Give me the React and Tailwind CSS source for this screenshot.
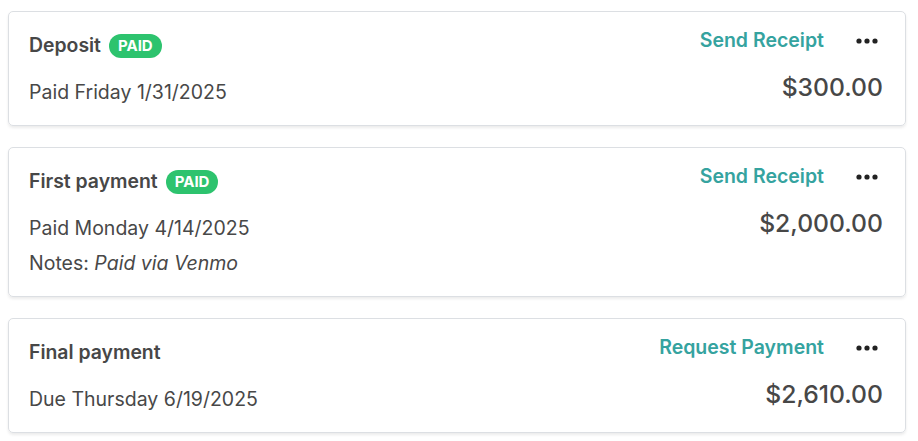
import React from 'react'

const payments = [
  { title: 'Deposit', paid: true, action: 'Send Receipt', date: 'Paid Friday 1/31/2025', amount: '$300.00' },
  { title: 'First payment', paid: true, action: 'Send Receipt', date: 'Paid Monday 4/14/2025', notes: 'Paid via Venmo', amount: '$2,000.00' },
  { title: 'Final payment', paid: false, action: 'Request Payment', date: 'Due Thursday 6/19/2025', amount: '$2,610.00' },
]

function Dots() {
  return (
    <svg width="22" height="6" viewBox="0 0 22 6" className="block">
      <circle cx="3" cy="3" r="2.6" fill="#222" />
      <circle cx="11" cy="3" r="2.6" fill="#222" />
      <circle cx="19" cy="3" r="2.6" fill="#222" />
    </svg>
  )
}

export default function App() {
  return (
    <div className="w-[918px] h-[441px] bg-white pl-2 pt-[11px] pr-3 flex flex-col gap-[21px]" style={{ fontFamily: 'Inter, "Noto Sans", sans-serif' }}>
      {payments.map(p => (
        <div key={p.title} className="w-[898px] rounded-[5px] border border-[#dcdfe3] shadow-[0_2px_3px_rgba(0,0,0,0.08)] flex justify-between pl-5 pr-[22px] pt-[22px] pb-[19px]">
          <div className="flex flex-col">
            <div className="flex items-center gap-2 h-6">
              <span className="text-[19.4px] font-semibold text-[#474747]">{p.title}</span>
              {p.paid && (
                <span className="h-6 px-[9px] rounded-full bg-[#2dc36e] text-white text-[15px] font-bold flex items-center">PAID</span>
              )}
            </div>
            <div className="mt-5 text-[19.5px] leading-7 text-[#484848]">{p.date}</div>
            {p.notes && (
              <div className="mt-[7px] text-[19.5px] leading-7 text-[#484848]">
                Notes: <span className="italic">{p.notes}</span>
              </div>
            )}
          </div>
          <div className="flex flex-col items-end -mt-[5px]">
            <div className="flex items-center gap-8 h-6 pr-[5px]">
              <span className="text-[19.5px] font-semibold text-[#35a39f]">{p.action}</span>
              <Dots />
            </div>
            <div className="mt-5 text-[24.7px] leading-7 font-medium text-[#474747]">{p.amount}</div>
          </div>
        </div>
      ))}
    </div>
  )
}
